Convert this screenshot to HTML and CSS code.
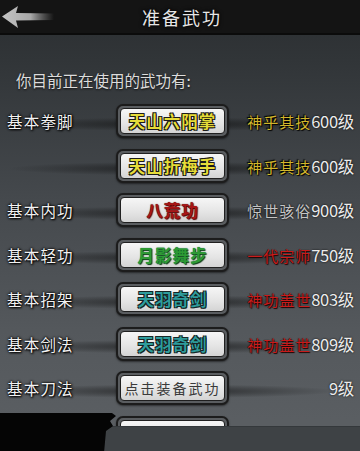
FILE: index.html
```html
<!DOCTYPE html>
<html>
    <head>
        <meta charset="utf-8">
        <title>准备武功</title>
        <link rel="stylesheet" href="styles.css">
    </head>
    <body>
        <div class="screen">
            <div class="topbar">
                <span class="back">
                    <svg width="54" height="26" viewBox="0 0 54 26">
                        <defs>
                            <linearGradient id="fade" x1="0" x2="1" y1="0" y2="0">
                                <stop offset="0" stop-color="#c4c4c4"/>
                                <stop offset="0.55" stop-color="#a8a8a8"/>
                                <stop offset="1" stop-color="#8a8a8a" stop-opacity="0"/>
                            </linearGradient>
                        </defs>
                        <path d="M2 12.5 L18 2 L16 9 L54 9.5 L54 16 L16 16.5 L18 24 Z" fill="url(#fade)"/>
                    </svg>
                </span>
                <h1 class="title">准备武功</h1>
            </div>

            <p class="intro">你目前正在使用的武功有:</p>

            <ul class="skills">
                <li class="row">
                    <span class="kind">基本拳脚</span>
                    <span class="btn"><span class="face gold">天山六阳掌</span></span>
                    <span class="level"><em class="gold">神乎其技</em>600级</span>
                </li>
                <li class="row">
                    <span class="kind"></span>
                    <span class="btn"><span class="face gold">天山折梅手</span></span>
                    <span class="level"><em class="gold">神乎其技</em>600级</span>
                </li>
                <li class="row">
                    <span class="kind">基本内功</span>
                    <span class="btn"><span class="face red">八荒功</span></span>
                    <span class="level"><em class="grey">惊世骇俗</em>900级</span>
                </li>
                <li class="row">
                    <span class="kind">基本轻功</span>
                    <span class="btn"><span class="face green">月影舞步</span></span>
                    <span class="level"><em class="red">一代宗师</em>750级</span>
                </li>
                <li class="row">
                    <span class="kind">基本招架</span>
                    <span class="btn"><span class="face teal">天羽奇剑</span></span>
                    <span class="level"><em class="red">神功盖世</em>803级</span>
                </li>
                <li class="row">
                    <span class="kind">基本剑法</span>
                    <span class="btn"><span class="face teal">天羽奇剑</span></span>
                    <span class="level"><em class="red">神功盖世</em>809级</span>
                </li>
                <li class="row">
                    <span class="kind">基本刀法</span>
                    <span class="btn"><span class="face empty">点击装备武功</span></span>
                    <span class="level">9级</span>
                </li>
                <li class="row">
                    <span class="kind"></span>
                    <span class="btn"><span class="face"></span></span>
                    <span class="level"></span>
                </li>
            </ul>

            <div class="footer">
                <div class="blot"></div>
            </div>
        </div>
    </body>
</html>
```

FILE: styles.css
```css
*{
    padding: 0;
    margin: 0;
}
body {
    background: #2b2e31;
    font-family: "Noto Sans CJK SC", "Noto Sans", sans-serif;
}
.screen {
    width: 360px;
    height: 451px;
    overflow: hidden;
    display: flex;
    flex-direction: column;
    background: linear-gradient(#2a2d30 0px, #313538 60px, #45494d 200px, #54585c 330px, #5a5e62 420px);
}
.topbar {
    height: 33px;
    flex: none;
    position: relative;
    background: #141414;
    border-bottom: 2px solid #0b0b0b;
    display: flex;
    align-items: center;
    justify-content: center;
}
.back {
    position: absolute;
    left: 0;
    top: 4px;
}
.title {
    font-size: 18px;
    font-weight: normal;
    letter-spacing: 2px;
    color: #e6e6e6;
    text-shadow: 0 0 2px #000, 0 0 4px #000;
    margin-left: 4px;
}
.intro {
    padding: 35px 0 0 16px;
    line-height: 20px;
    font-size: 15.5px;
    color: #dcdcdc;
    margin-bottom: 9px;
    text-shadow: 0 1px 2px #111;
}
.skills {
    list-style: none;
    height: 327px;
    overflow: hidden;
    flex: none;
}
.row {
    height: 44.5px;
    display: flex;
    align-items: center;
    background: radial-gradient(165px 7px at 48% 56%, rgba(10,10,10,0.6), rgba(10,10,10,0));
}
.kind {
    width: 116px;
    flex: none;
    padding-left: 7px;
    box-sizing: border-box;
    font-size: 15.5px;
    letter-spacing: 1.2px;
    color: #f2f2f2;
    text-shadow: 0 0 2px #000, 0 0 3px #000, 1px 1px 2px #000;
}
.btn {
    width: 113px;
    height: 34px;
    flex: none;
    box-sizing: border-box;
    border: 2px solid #1c1c1c;
    border-radius: 7px;
    background: #5a5d60;
    padding: 2px;
    box-shadow: 0 1px 2px rgba(0,0,0,0.5);
}
.face {
    display: flex;
    height: 100%;
    align-items: center;
    justify-content: center;
    box-sizing: border-box;
    border: 1px solid #202020;
    border-radius: 4px;
    background: linear-gradient(#f6f6f6, #e4e4e4 60%, #d4d4d4);
    font-size: 16.5px;
    font-weight: bold;
    letter-spacing: 1px;
}
.face.gold {
    color: #e6dc3a;
    text-shadow: 0 0 1px #000, 0 0 1px #000, 1px 1px 0 #222, -1px -1px 0 #222, 1px -1px 0 #222, -1px 1px 0 #222;
}
.face.red {
    color: #a81616;
    text-shadow: 0 0 1px #300, 1px 1px 1px #500;
}
.face.green {
    color: #2e9a34;
    text-shadow: 0 0 1px #063, 1px 1px 1px #0a3a10;
}
.face.teal {
    color: #2f9c9c;
    text-shadow: 0 0 1px #000, 1px 1px 0 #1a2a2a, -1px -1px 0 #1a2a2a, 1px -1px 0 #1a2a2a, -1px 1px 0 #1a2a2a;
}
.face.empty {
    color: #3a3a3a;
    font-weight: normal;
    font-size: 14px;
    letter-spacing: 2px;
}
.level {
    flex: 1;
    text-align: right;
    padding-right: 6px;
    font-size: 16.5px;
    color: #ececec;
    text-shadow: 0 0 2px #000;
    letter-spacing: -0.3px;
}
.level em {
    font-style: normal;
    font-size: 15px;
    letter-spacing: 1px;
}
.level .gold {
    color: #d2b62c;
    text-shadow: 0 0 1px #000, 1px 1px 1px #000, -1px -1px 1px #000;
}
.level .grey {
    color: #c4c4c4;
}
.level .red {
    color: #c81c1c;
    text-shadow: 0 0 1px #000, 1px 1px 1px #200;
}
.footer {
    flex: 1;
    position: relative;
    background: #3e4245;
    border-top: 1px solid #34383b;
}
.blot {
    position: absolute;
    left: 0;
    top: -14px;
    width: 118px;
    height: 40px;
    background: #050505;
    clip-path: polygon(0 0, 112px 0, 116px 3px, 110px 8px, 113px 13px, 106px 18px, 104px 40px, 0 40px);
}
```
